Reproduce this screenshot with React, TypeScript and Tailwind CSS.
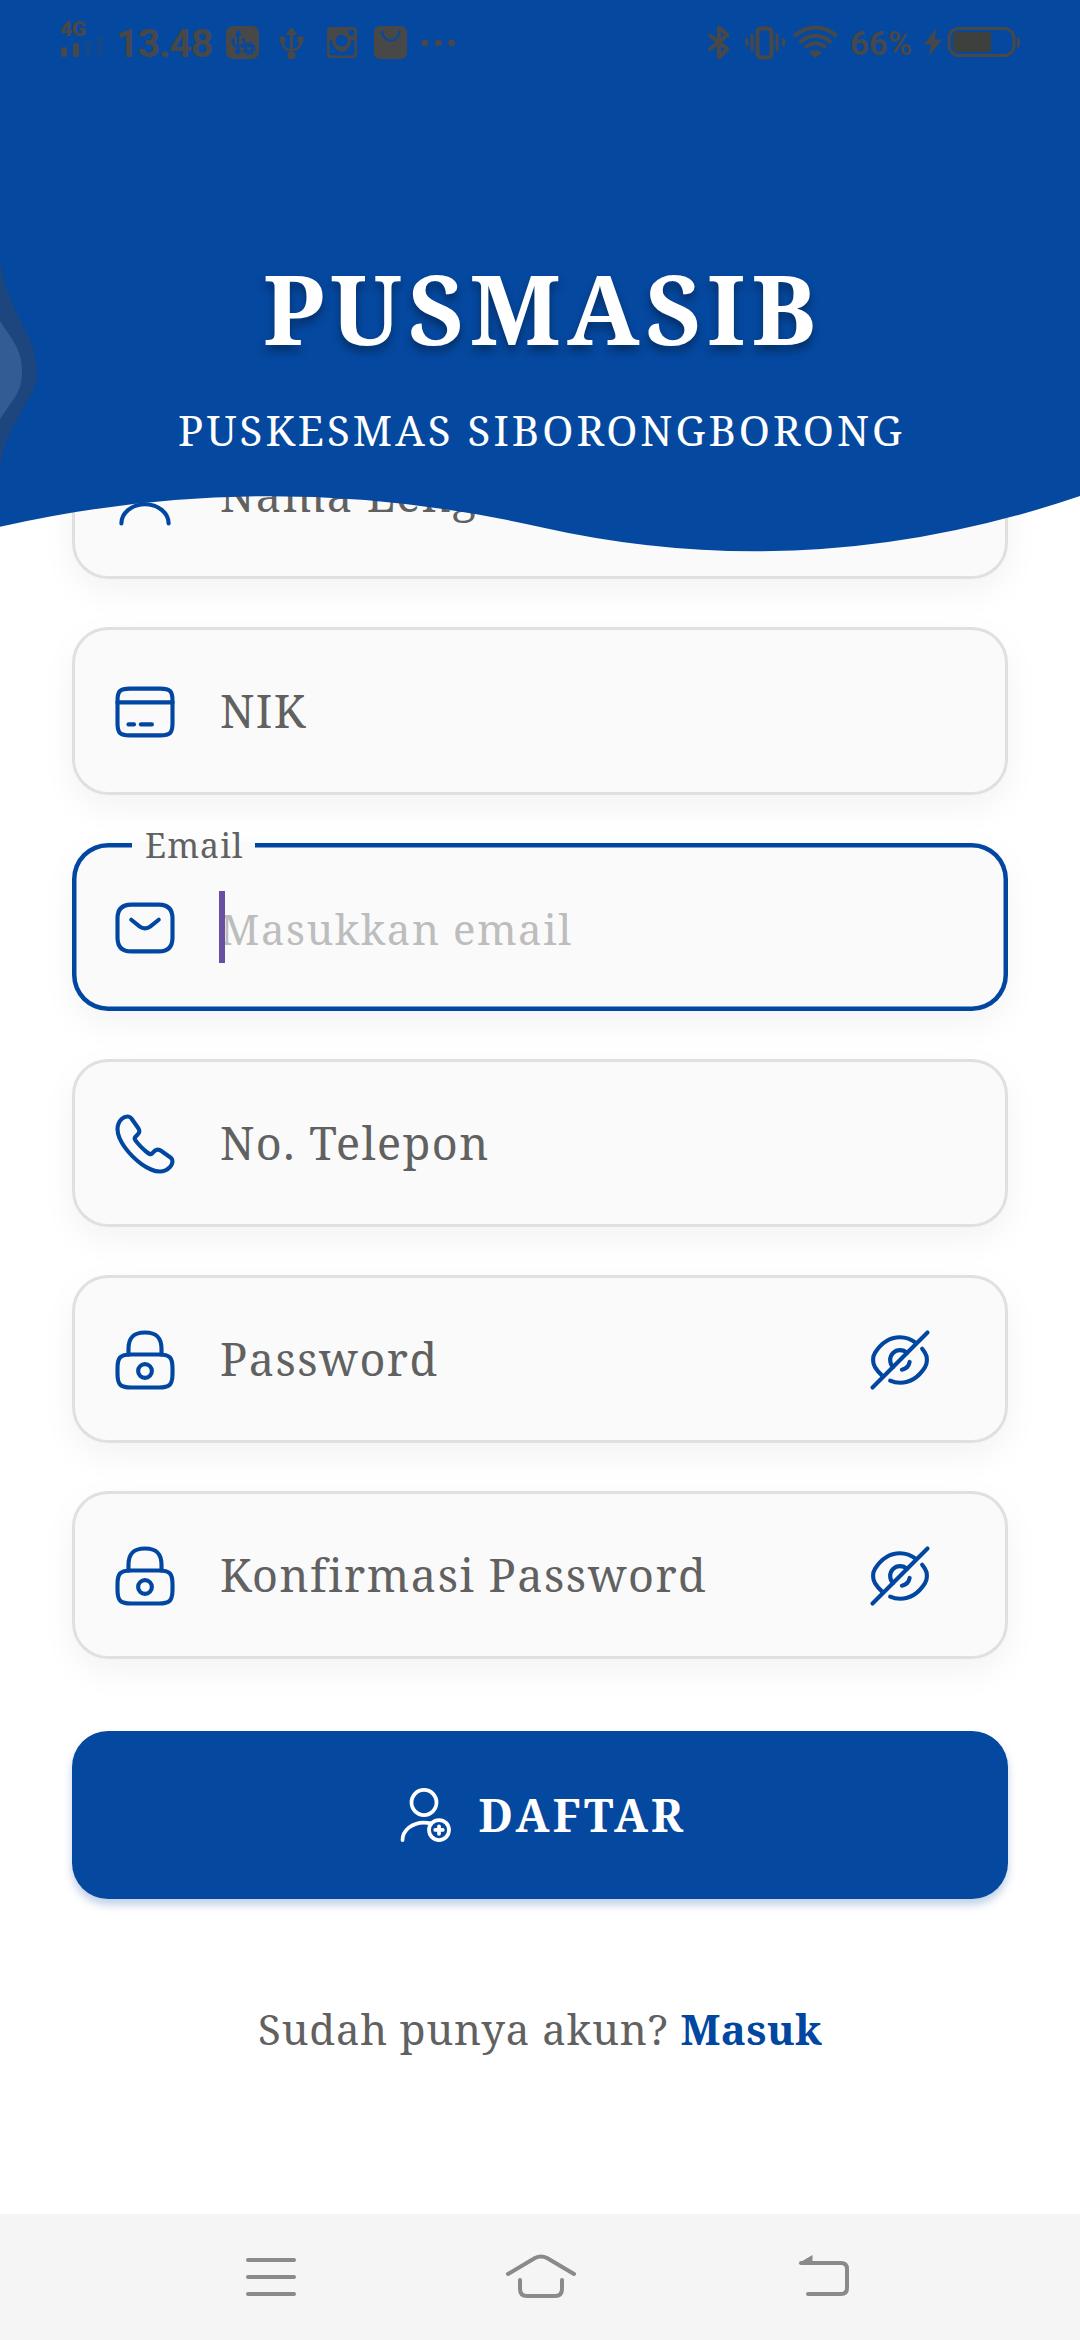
import type { ReactNode } from 'react';

const ICONS = {
  user: ['M12 12C14.7614 12 17 9.76142 17 7C17 4.23858 14.7614 2 12 2C9.23858 2 7 4.23858 7 7C7 9.76142 9.23858 12 12 12Z', 'M20.59 22C20.59 18.13 16.74 15 12 15C7.26 15 3.41 18.13 3.41 22'],
  card: ['M2 8.505H22', 'M6 16.505H8', 'M10.5 16.505H14.5', 'M6.44 3.505H17.55C21.11 3.505 22 4.385 22 7.895V16.105C22 19.615 21.11 20.495 17.56 20.495H6.44C2.89 20.495 2 19.615 2 16.105V7.895C2 4.385 2.89 3.505 6.44 3.505Z'],
  mail: ['M17 20.5H7C4 20.5 2 19 2 15.5V8.5C2 5 4 3.5 7 3.5H17C20 3.5 22 5 22 8.5V15.5C22 19 20 20.5 17 20.5Z', 'M17 9L13.87 11.5C12.84 12.32 11.15 12.32 10.12 11.5L7 9'],
  call: ['M21.97 18.33C21.97 18.69 21.89 19.06 21.72 19.42C21.55 19.78 21.33 20.12 21.04 20.44C20.55 20.98 20.01 21.37 19.4 21.62C18.8 21.87 18.15 22 17.45 22C16.43 22 15.34 21.76 14.19 21.27C13.04 20.78 11.89 20.12 10.75 19.29C9.6 18.45 8.51 17.52 7.47 16.49C6.44 15.45 5.51 14.36 4.68 13.22C3.86 12.08 3.2 10.94 2.72 9.81C2.24 8.67 2 7.58 2 6.54C2 5.86 2.12 5.21 2.36 4.61C2.6 4 2.98 3.44 3.51 2.94C4.15 2.31 4.85 2 5.59 2C5.87 2 6.15 2.06 6.4 2.18C6.66 2.3 6.89 2.48 7.07 2.74L9.39 6.01C9.57 6.26 9.7 6.49 9.79 6.71C9.88 6.92 9.93 7.13 9.93 7.32C9.93 7.56 9.86 7.8 9.72 8.03C9.59 8.26 9.4 8.5 9.16 8.74L8.4 9.53C8.29 9.64 8.24 9.77 8.24 9.93C8.24 10.01 8.25 10.08 8.27 10.16C8.3 10.24 8.33 10.3 8.35 10.36C8.53 10.69 8.84 11.12 9.28 11.64C9.73 12.16 10.21 12.69 10.73 13.22C11.27 13.75 11.79 14.24 12.32 14.69C12.84 15.13 13.27 15.43 13.61 15.61C13.66 15.63 13.72 15.66 13.79 15.69C13.87 15.72 13.95 15.73 14.04 15.73C14.21 15.73 14.34 15.67 14.45 15.56L15.21 14.81C15.46 14.56 15.7 14.37 15.93 14.25C16.16 14.11 16.39 14.04 16.64 14.04C16.83 14.04 17.03 14.08 17.25 14.17C17.47 14.26 17.7 14.39 17.95 14.56L21.26 16.91C21.52 17.09 21.7 17.3 21.81 17.55C21.91 17.8 21.97 18.05 21.97 18.33Z'],
  lock: ['M6 10V8C6 4.69 7 2 12 2C17 2 18 4.69 18 8V10', 'M12 18.5C13.38 18.5 14.5 17.38 14.5 16C14.5 14.62 13.38 13.5 12 13.5C10.62 13.5 9.5 14.62 9.5 16C9.5 17.38 10.62 18.5 12 18.5Z', 'M17 22H7C3 22 2 21 2 17V15C2 11 3 10 7 10H17C21 10 22 11 22 15V17C22 21 21 22 17 22Z'],
  eyeSlash: ['M14.53 9.47L9.47 14.53C8.82 13.88 8.42 12.99 8.42 12C8.42 10.02 10.02 8.42 12 8.42C12.99 8.42 13.88 8.82 14.53 9.47Z', 'M17.82 5.77C16.07 4.45 14.07 3.73 12 3.73C8.47 3.73 5.18 5.81 2.89 9.41C1.99 10.82 1.99 13.19 2.89 14.6C3.68 15.84 4.6 16.91 5.6 17.77', 'M8.42 19.53C9.56 20.01 10.77 20.27 12 20.27C15.53 20.27 18.82 18.19 21.11 14.59C22.01 13.18 22.01 10.81 21.11 9.4C20.78 8.88 20.42 8.39 20.05 7.93', 'M15.51 12.7C15.25 14.11 14.1 15.26 12.69 15.52', 'M9.47 14.53L2 22', 'M22 2L14.53 9.47'],
  userAdd: ['M12 12C14.7614 12 17 9.76142 17 7C17 4.23858 14.7614 2 12 2C9.23858 2 7 4.23858 7 7C7 9.76142 9.23858 12 12 12Z', 'M3.41 22C3.41 18.13 7.26 15 12 15C12.96 15 13.89 15.13 14.76 15.37', 'M22 18C22 20.209 20.209 22 18 22C15.791 22 14 20.209 14 18C14 15.791 15.791 14 18 14C20.209 14 22 15.791 22 18Z', 'M19.49 17.98H16.51', 'M18 16.52V19.51'],
};

function Icon({ name, className }: { name: keyof typeof ICONS; className: string }) {
  return (
    <svg viewBox="0 0 24 24" fill="none" stroke="currentColor" strokeWidth="1.5" strokeLinecap="round" strokeLinejoin="round" className={className}>
      {ICONS[name].map((d) => (
        <path key={d} d={d} />
      ))}
    </svg>
  );
}

function StatusBar() {
  return (
    <div className="flex h-[89px] items-start pl-[60px] pr-[59px] text-[#484848]">
      <div className="flex w-[44px] flex-col pt-[20px]">
        <span className="font-[Roboto] text-[21px] leading-[19px] font-black tracking-[-0.5px]">4G</span>
        <svg width="44" height="20" className="-mt-[2px]" fill="currentColor">
          <rect x="1" y="10" width="6" height="10" rx="2.5" />
          <rect x="13" y="6" width="6" height="14" rx="2.5" />
          <rect x="25" y="4" width="6" height="16" rx="1" opacity=".22" />
          <rect x="37" y="0" width="6" height="20" rx="1" opacity=".22" />
        </svg>
      </div>
      <span className="ml-[12px] w-[110px] pt-[20px] font-[Roboto] text-[39.5px] leading-[47px] font-bold tracking-[-1.2px]">13.48</span>
      <svg width="229" height="34" className="mt-[26px]" fill="currentColor">
        <rect x="0" y="0" width="33" height="33" rx="7" />
        <g stroke="#05489F" strokeWidth="2" fill="none" strokeLinecap="round">
          <path d="M12 6V26M7 14V17Q7 20 12 21Q18 20 18 17V13" />
          <path d="M10.5 9L12.3 5.5L14 9Z" fill="#05489F" />
          <circle cx="7" cy="14.5" r="1" fill="#05489F" />
          <circle cx="12" cy="25.5" r="1.8" fill="#05489F" />
          <path d="M17.2 12.4V14.5" strokeWidth="3" strokeLinecap="butt" />
        </g>
        <circle cx="23" cy="22.5" r="6" fill="none" stroke="#05489F" strokeWidth="1.6" strokeDasharray="2.35 2.36" />
        <circle cx="23" cy="22.5" r="3.7" fill="none" stroke="#05489F" strokeWidth="3.2" />
        <g>
          <path d="M65.5 1L71.5 9H59.5Z" />
          <rect x="64" y="7" width="3" height="22" />
          <circle cx="65.5" cy="29.5" r="4" />
          <circle cx="56.5" cy="13.5" r="3" />
          <rect x="71.5" y="10.5" width="6" height="6" />
          <path d="M56.5 14V17Q57 23.5 65.5 24.5Q74.5 23 74.5 17V14" fill="none" stroke="currentColor" strokeWidth="2.6" />
        </g>
        <path fillRule="evenodd" d="M105 1H127Q131 1 131 5V28Q131 32 127 32H105Q101 32 101 28V5Q101 1 105 1ZM122.5 4V9.5H128V4ZM103.5 14V26.5Q103.5 29.5 106.5 29.5H125.5Q128.5 29.5 128.5 26.5V14H125.2A9.5 11.5 0 0 1 106.2 14Z" />
        <circle cx="115.7" cy="14.8" r="7.8" fill="none" stroke="currentColor" strokeWidth="3.4" />
        <circle cx="115.7" cy="14.8" r="6" fill="#05489F" />
        <rect x="148" y="0" width="33" height="33" rx="6" />
        <path d="M156 4.5C156.5 18 173 18 173.5 4.5" fill="none" stroke="#05489F" strokeWidth="2" />
        <circle cx="199" cy="17" r="3.3" />
        <circle cx="212.3" cy="17" r="3.3" />
        <circle cx="225.6" cy="17" r="3.3" />
      </svg>
      <svg width="134" height="36" className="mt-[25px] ml-auto" fill="none" stroke="currentColor" strokeWidth="4" strokeLinecap="round" strokeLinejoin="round">
        <path d="M3 10.5L20.5 24L12 32.5V2.5L20.5 10L3 24" />
        <rect x="50.5" y="3.5" width="14" height="29" rx="3.5" />
        <path d="M45 10V25M70 10V25M40 14.5V20M76.5 14.5V20" strokeWidth="3" />
        <path d="M88.5 10Q108.5 -5 128.5 10M94 16.5Q108.5 5 123 16.5M99.5 21.5Q108.5 15 117.5 21.5" />
        <path d="M103 27.5Q108.5 24 114 27.5L108.5 32Z" fill="currentColor" strokeWidth="1.5" />
      </svg>
      <span className="ml-[9px] w-[66px] pt-[25px] font-[Roboto] text-[33px] leading-[38px] font-semibold">66%</span>
      <svg width="98" height="34" className="mt-[25px] ml-[7px]" fill="currentColor">
        <path d="M13.5 3L1 19.5H8L6 31L19 14.5H11.5Z" />
        <rect x="26" y="3.5" width="65" height="27" rx="10" fill="none" stroke="currentColor" strokeWidth="3" />
        <path d="M35 7H68V27H35Q30 27 30 22V12Q30 7 35 7Z" fill="#3d403c" />
        <path d="M94 12Q97 12.5 97 17.5Q97 22.5 94 23Z" />
      </svg>
    </div>
  );
}

function Header() {
  return (
    <header className="relative z-10 h-[558px] shrink-0 text-white">
      <svg viewBox="0 0 1080 558" className="absolute inset-0 -z-10 h-[558px] w-[1080px]">
        <path d="M0 0H1080V496Q810 588 540 527Q270 465.5 0 526.8Z" fill="#05489F" />
        <path d="M0 260C3 284 12 304 21 321C29 338 37 350 37 372C37 389 29 397 21 412C8 436 0 452 0 479Z" fill="#1c467d" />
        <path d="M0 321L12 339C19 350 22 359 22 371C22 385 18 393 13 400L0 419Z" fill="#335c94" />
      </svg>
      <StatusBar />
      <h1 className="mt-[153px] pl-[5px] text-center text-[96px] leading-[131px] font-bold tracking-[6px] [text-shadow:0_6px_8px_rgba(0,0,0,0.35)]">PUSMASIB</h1>
      <p className="mt-[28px] pl-[3px] text-center text-[42px] leading-[58px] tracking-[3px]">PUSKESMAS SIBORONGBORONG</p>
    </header>
  );
}

function Field({ icon, label, children, trailing }: { icon: keyof typeof ICONS; label?: string; children?: ReactNode; trailing?: boolean }) {
  return (
    <div
      className={
        'relative flex h-[168px] items-center rounded-[36px] bg-[#fafafa] pr-[75px] pl-[40px] ' +
        (label ? 'shadow-[inset_0_0_0_3px_#e0e0e0,0_12px_35px_rgba(0,0,0,0.05)]' : 'shadow-[inset_0_0_0_4.5px_#0147A1,0_12px_35px_rgba(0,0,0,0.05)]')
      }
    >
      <Icon name={icon} className="mt-[2px] size-[66px] shrink-0 text-[#0147A1]" />
      <div className="ml-[42px] flex-1">
        {label && <span className="text-[45px] leading-[62px] tracking-[1.5px] whitespace-nowrap text-[#616161]">{label}</span>}
        {children}
      </div>
      {trailing && <Icon name="eyeSlash" className="mt-[2px] size-[66px] shrink-0 text-[#0147A1]" />}
    </div>
  );
}

export default function App() {
  return (
    <div className="flex h-[2340px] w-[1080px] flex-col overflow-hidden bg-white font-['Noto_Serif',serif]">
      <Header />
      <main className="-mt-[147px] flex flex-col px-[72px]">
        <div className="flex flex-col gap-[48px]">
          <Field icon="user" label="Nama Lengkap" />
          <Field icon="card" label="NIK" />
          <Field icon="mail">
            <span className="absolute -top-[21px] left-[60px] flex h-[46px] w-[123px] items-center bg-[linear-gradient(#fafafa,#fafafa)] bg-[length:100%_6px] bg-[position:0_20px] bg-no-repeat pl-[13px] text-[33.75px] leading-[46px] tracking-[1.1px] text-[#616161]">
              Email
            </span>
            <div className="relative pt-[4px] text-[42px] leading-[58px] tracking-[1.5px] text-[#bdbdbd]">
              Masukkan email
              <span className="absolute -top-[5px] -left-px h-[72px] w-[6px] bg-[#6750A4]" />
            </div>
          </Field>
          <Field icon="call" label="No. Telepon" />
          <Field icon="lock" label="Password" trailing />
          <Field icon="lock" label="Konfirmasi Password" trailing />
        </div>
        <button className="mt-[72px] flex h-[168px] items-center justify-center rounded-[36px] bg-[#05489F] text-white shadow-[0_6px_9px_rgba(5,72,159,0.25)]">
          <Icon name="userAdd" className="size-[60px]" />
          <span className="ml-[25px] text-[45px] leading-[62px] font-bold tracking-[3.3px]">DAFTAR</span>
        </button>
        <p className="mt-[101px] text-center text-[42px] leading-[58px] tracking-[0.9px] text-[#616161]">
          Sudah punya akun? <b className="tracking-[0.3px] text-[#0147A1]">Masuk</b>
        </p>
      </main>
      <nav className="mt-auto flex h-[126px] shrink-0 items-start bg-[#f5f5f5] text-[#8a8a8a]">
        <svg width="50" height="44" className="mt-[42px] ml-[246px]" fill="none" stroke="currentColor" strokeWidth="4" strokeLinecap="round">
          <path d="M2 4H48M2 21H48M2 38H48" />
        </svg>
        <svg width="70" height="46" className="mt-[40px] ml-[210px]" fill="none" stroke="currentColor" strokeWidth="4" strokeLinecap="round" strokeLinejoin="round">
          <path d="M2 20L29 4Q35 1 41 4L68 20M14 26V35Q14 42 21 42H49Q56 42 56 35V26" />
        </svg>
        <svg width="52" height="46" className="mt-[39px] ml-[222px]" fill="none" stroke="currentColor" strokeWidth="4" strokeLinecap="round">
          <path d="M3 10H43Q49 10 49 16V35Q49 41 43 41H10" />
          <path d="M0 10.5L14.5 2V10H2Z" fill="currentColor" stroke="none" />
        </svg>
      </nav>
    </div>
  );
}
